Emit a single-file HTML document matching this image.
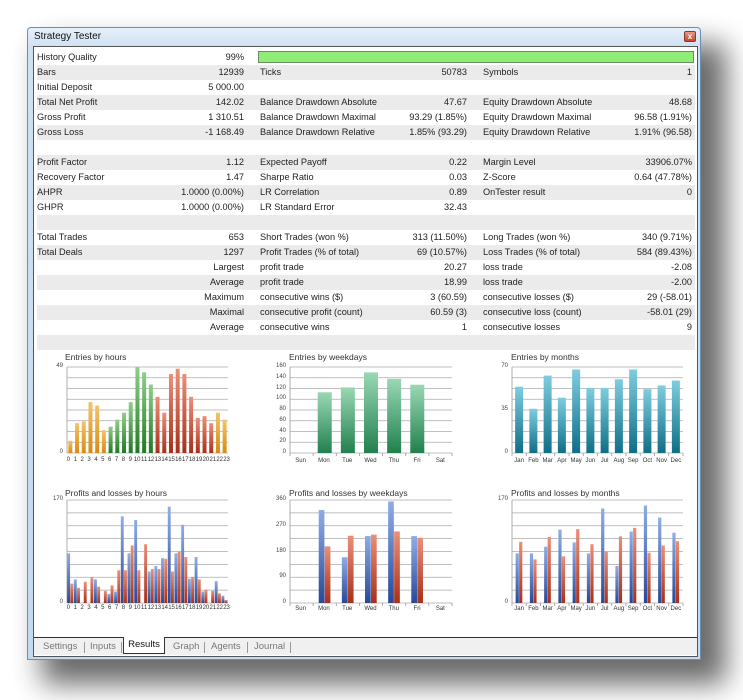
<!DOCTYPE html>
<html><head><meta charset="utf-8">
<style>
*{margin:0;padding:0;box-sizing:border-box}
body{width:743px;height:700px;background:#fff;position:relative;overflow:hidden;font-family:"Liberation Sans",sans-serif;color:#222}
.shadow{position:absolute;left:42px;top:44px;width:684px;height:640px;background:#444;filter:blur(14px);opacity:.8}
.win{position:absolute;left:27px;top:27px;width:674px;height:633px;background:linear-gradient(#e6f0fa,#cfe0f2 20px,#c4daf0);border:1px solid #6d8fae;border-radius:4px 4px 0 0}
.title{position:absolute;left:6px;top:3px;font-size:10px;color:#111}
.close{position:absolute;left:656px;top:3px;width:12px;height:11px;background:linear-gradient(#e79a85,#c7452c);border:1px solid #8a3a2a;border-radius:2px;color:#fff;font-size:8px;text-align:center;line-height:9px;font-weight:bold}
.content{position:absolute;left:5px;top:18px;width:665px;height:611px;background:#fff;border:1px solid #555}
.row{position:absolute;left:3px;width:658px;height:15px;font-size:9.2px;line-height:15px}
.g{background:#ebebeb}
.row span{position:absolute;white-space:nowrap}
.tabs{position:absolute;left:0;top:590px;width:663px;height:18px;background:#f0f0f0;border-top:1px solid #333;font-size:9.5px;color:#777}
.tabs span{position:absolute;top:3px}
.sep{width:1px;height:11px;background:#999;top:4px!important}
.act{position:absolute;left:89px;top:-1px;width:42px;height:17px;background:#fff;border:1px solid #333;border-top:none;color:#111;text-align:center;line-height:15px}
.ct{position:absolute;font-size:8.5px;color:#333}
.yl{position:absolute;font-size:6px;color:#444;text-align:right;width:20px}
.xl{position:absolute;display:flex;font-size:6px;color:#333}
.xl span{flex:1;text-align:center}
.a{left:0}.b{right:451px}.c{left:223px}.d{right:228px}.e{left:446px}.f{right:3px}
</style></head><body>
<div class="shadow"></div>
<div class="win">
<div class="title">Strategy Tester</div>
<div class="close">x</div>
<div class="content">
<div class="row" style="top:3px"><span class="a">History Quality</span><span class="b">99%</span></div>
<div style="position:absolute;left:224px;top:4px;width:436px;height:12px;background:#8fec76;border:1px solid #6a8f60"></div>
<div class="row g" style="top:18px"><span class="a">Bars</span><span class="b">12939</span><span class="c">Ticks</span><span class="d">50783</span><span class="e">Symbols</span><span class="f">1</span></div>
<div class="row" style="top:33px"><span class="a">Initial Deposit</span><span class="b">5 000.00</span></div>
<div class="row g" style="top:48px"><span class="a">Total Net Profit</span><span class="b">142.02</span><span class="c">Balance Drawdown Absolute</span><span class="d">47.67</span><span class="e">Equity Drawdown Absolute</span><span class="f">48.68</span></div>
<div class="row" style="top:63px"><span class="a">Gross Profit</span><span class="b">1 310.51</span><span class="c">Balance Drawdown Maximal</span><span class="d">93.29 (1.85%)</span><span class="e">Equity Drawdown Maximal</span><span class="f">96.58 (1.91%)</span></div>
<div class="row g" style="top:78px"><span class="a">Gross Loss</span><span class="b">-1 168.49</span><span class="c">Balance Drawdown Relative</span><span class="d">1.85% (93.29)</span><span class="e">Equity Drawdown Relative</span><span class="f">1.91% (96.58)</span></div>
<div class="row" style="top:93px"></div>
<div class="row g" style="top:108px"><span class="a">Profit Factor</span><span class="b">1.12</span><span class="c">Expected Payoff</span><span class="d">0.22</span><span class="e">Margin Level</span><span class="f">33906.07%</span></div>
<div class="row" style="top:123px"><span class="a">Recovery Factor</span><span class="b">1.47</span><span class="c">Sharpe Ratio</span><span class="d">0.03</span><span class="e">Z-Score</span><span class="f">0.64 (47.78%)</span></div>
<div class="row g" style="top:138px"><span class="a">AHPR</span><span class="b">1.0000 (0.00%)</span><span class="c">LR Correlation</span><span class="d">0.89</span><span class="e">OnTester result</span><span class="f">0</span></div>
<div class="row" style="top:153px"><span class="a">GHPR</span><span class="b">1.0000 (0.00%)</span><span class="c">LR Standard Error</span><span class="d">32.43</span></div>
<div class="row g" style="top:168px"></div>
<div class="row" style="top:183px"><span class="a">Total Trades</span><span class="b">653</span><span class="c">Short Trades (won %)</span><span class="d">313 (11.50%)</span><span class="e">Long Trades (won %)</span><span class="f">340 (9.71%)</span></div>
<div class="row g" style="top:198px"><span class="a">Total Deals</span><span class="b">1297</span><span class="c">Profit Trades (% of total)</span><span class="d">69 (10.57%)</span><span class="e">Loss Trades (% of total)</span><span class="f">584 (89.43%)</span></div>
<div class="row" style="top:213px"><span class="b">Largest</span><span class="c">profit trade</span><span class="d">20.27</span><span class="e">loss trade</span><span class="f">-2.08</span></div>
<div class="row g" style="top:228px"><span class="b">Average</span><span class="c">profit trade</span><span class="d">18.99</span><span class="e">loss trade</span><span class="f">-2.00</span></div>
<div class="row" style="top:243px"><span class="b">Maximum</span><span class="c">consecutive wins ($)</span><span class="d">3 (60.59)</span><span class="e">consecutive losses ($)</span><span class="f">29 (-58.01)</span></div>
<div class="row g" style="top:258px"><span class="b">Maximal</span><span class="c">consecutive profit (count)</span><span class="d">60.59 (3)</span><span class="e">consecutive loss (count)</span><span class="f">-58.01 (29)</span></div>
<div class="row" style="top:273px"><span class="b">Average</span><span class="c">consecutive wins</span><span class="d">1</span><span class="e">consecutive losses</span><span class="f">9</span></div>
<div class="row g" style="top:288px"></div>
<div class="tabs">
<span style="left:9px">Settings</span><span class="sep" style="left:50px"></span>
<span style="left:56px">Inputs</span><span class="sep" style="left:87px"></span>
<div class="act">Results</div>
<span style="left:139px">Graph</span><span class="sep" style="left:170px"></span>
<span style="left:177px">Agents</span><span class="sep" style="left:213px"></span>
<span style="left:220px">Journal</span><span class="sep" style="left:256px"></span>
</div>
</div>
</div>

<svg id="ch" width="743" height="700" style="position:absolute;left:0;top:0">
<defs>
<linearGradient id="gO" x1="0" y1="0" x2="0" y2="1"><stop offset="0" stop-color="#f2c56a"/><stop offset="1" stop-color="#d98a10"/></linearGradient>
<linearGradient id="gG" x1="0" y1="0" x2="0" y2="1"><stop offset="0" stop-color="#8fd08a"/><stop offset="1" stop-color="#1f7a22"/></linearGradient>
<linearGradient id="gR" x1="0" y1="0" x2="0" y2="1"><stop offset="0" stop-color="#ec8f78"/><stop offset="1" stop-color="#a8301a"/></linearGradient>
<linearGradient id="gW" x1="0" y1="0" x2="0" y2="1"><stop offset="0" stop-color="#9ad8b4"/><stop offset="1" stop-color="#21804e"/></linearGradient>
<linearGradient id="gC" x1="0" y1="0" x2="0" y2="1"><stop offset="0" stop-color="#7fcde0"/><stop offset="1" stop-color="#0e6f86"/></linearGradient>
<linearGradient id="gB" x1="0" y1="0" x2="0" y2="1"><stop offset="0" stop-color="#8faee6"/><stop offset="1" stop-color="#27489a"/></linearGradient>
</defs>
</svg>

<div class="ct" style="left:65px;top:352px">Entries by hours</div>
<div class="ct" style="left:289px;top:352px">Entries by weekdays</div>
<div class="ct" style="left:511px;top:352px">Entries by months</div>
<div class="ct" style="left:65px;top:488px">Profits and losses by hours</div>
<div class="ct" style="left:289px;top:488px">Profits and losses by weekdays</div>
<div class="ct" style="left:511px;top:488px">Profits and losses by months</div>

<div class="yl" style="left:43px;top:363px">49</div><div class="yl" style="left:43px;top:449px">0</div>
<div class="yl" style="left:266px;top:363px">160</div><div class="yl" style="left:266px;top:374px">140</div><div class="yl" style="left:266px;top:385px">120</div><div class="yl" style="left:266px;top:395px">100</div><div class="yl" style="left:266px;top:406px">80</div><div class="yl" style="left:266px;top:417px">60</div><div class="yl" style="left:266px;top:428px">40</div><div class="yl" style="left:266px;top:438px">20</div><div class="yl" style="left:266px;top:449px">0</div>
<div class="yl" style="left:488px;top:363px">70</div><div class="yl" style="left:488px;top:406px">35</div><div class="yl" style="left:488px;top:449px">0</div>
<div class="yl" style="left:43px;top:496px">170</div><div class="yl" style="left:43px;top:599px">0</div>
<div class="yl" style="left:266px;top:496px">360</div><div class="yl" style="left:266px;top:522px">270</div><div class="yl" style="left:266px;top:548px">180</div><div class="yl" style="left:266px;top:573px">90</div><div class="yl" style="left:266px;top:599px">0</div>
<div class="yl" style="left:488px;top:496px">170</div><div class="yl" style="left:488px;top:599px">0</div>

<div class="xl" style="left:65px;top:457px;width:165px"><span>0</span><span>1</span><span>2</span><span>3</span><span>4</span><span>5</span><span>6</span><span>7</span><span>8</span><span>9</span><span>10</span><span>11</span><span>12</span><span>13</span><span>14</span><span>15</span><span>16</span><span>17</span><span>18</span><span>19</span><span>20</span><span>21</span><span>22</span><span>23</span></div>
<div class="xl" style="left:65px;top:605px;width:165px"><span>0</span><span>1</span><span>2</span><span>3</span><span>4</span><span>5</span><span>6</span><span>7</span><span>8</span><span>9</span><span>10</span><span>11</span><span>12</span><span>13</span><span>14</span><span>15</span><span>16</span><span>17</span><span>18</span><span>19</span><span>20</span><span>21</span><span>22</span><span>23</span></div>
<div class="xl" style="left:289px;top:458px;width:163px"><span>Sun</span><span>Mon</span><span>Tue</span><span>Wed</span><span>Thu</span><span>Fri</span><span>Sat</span></div>
<div class="xl" style="left:289px;top:606px;width:163px"><span>Sun</span><span>Mon</span><span>Tue</span><span>Wed</span><span>Thu</span><span>Fri</span><span>Sat</span></div>
<div class="xl" style="left:512px;top:458px;width:171px"><span>Jan</span><span>Feb</span><span>Mar</span><span>Apr</span><span>May</span><span>Jun</span><span>Jul</span><span>Aug</span><span>Sep</span><span>Oct</span><span>Nov</span><span>Dec</span></div>
<div class="xl" style="left:512px;top:606px;width:171px"><span>Jan</span><span>Feb</span><span>Mar</span><span>Apr</span><span>May</span><span>Jun</span><span>Jul</span><span>Aug</span><span>Sep</span><span>Oct</span><span>Nov</span><span>Dec</span></div>

<script>
var S=document.getElementById('ch'),NS='http://www.w3.org/2000/svg';
function el(t,a){var e=document.createElementNS(NS,t);for(var k in a)e.setAttribute(k,a[k]);S.appendChild(e);}
function chart(x0,x1,y0,y1,max,grid,series,bw,ticks){
 for(var i=0;i<=grid;i++){var y=y0+(y1-y0)*i/grid;el('line',{x1:x0,x2:x1,y1:y,y2:y,stroke:'#aaa','stroke-width':0.8});}
 el('line',{x1:x0,x2:x0,y1:y0,y2:y1,stroke:'#999','stroke-width':0.8});
 var n=series[0].v.length,sw=(x1-x0)/n;
 if(ticks)for(var i=0;i<=n;i++)el('line',{x1:x0+sw*i,x2:x0+sw*i,y1:y1,y2:y1+3,stroke:'#999','stroke-width':0.8});
 var m=series.length;
 for(var i=0;i<n;i++){
  var cx=x0+sw*(i+0.5),tot=bw*m;
  for(var s=0;s<m;s++){var v=series[s].v[i];if(!v)continue;var h=(y1-y0)*v/max;
   var f=typeof series[s].c=='string'?series[s].c:series[s].c[i];
   el('rect',{x:cx-tot/2+s*bw,y:y1-h,width:bw-(m>1?0.3:0),height:h,fill:'url(#'+f+')'});}
 }
}
var hc=[];for(var i=0;i<24;i++)hc.push(i<6||i>21?'gO':(i<13?'gG':'gR'));
chart(67,228,367,453,49,8,[{v:[7,17,18,29,27,13,15,19,23,29,49,46,39,32,23,45,48,45,32,20,21,17,23,19],c:hc}],4,false);
chart(290,452,367,453,160,8,[{v:[0,113,122,150,138,127,0],c:'gW'}],14,true);
chart(512,683,367,453,70,8,[{v:[54,36,63,45,68,53,53,60,68,52,55,59],c:'gC'}],8,true);
chart(67,228,500,603,170,8,[{v:[82,39,0,0,39,0,15,19,143,82,137,0,52,61,74,159,82,129,40,76,19,0,36,12],c:'gB'},{v:[32,25,35,42,27,20,29,54,54,95,54,97,56,56,73,52,85,76,43,39,22,20,16,5],c:'gR'}],3.2,false);
chart(290,452,500,603,360,8,[{v:[0,325,160,234,355,234,0],c:'gB'},{v:[0,198,235,239,250,228,0],c:'gR'}],6,true);
chart(512,683,500,603,170,8,[{v:[82,82,93,121,100,82,156,61,118,161,141,116],c:'gB'},{v:[101,72,109,77,122,97,85,110,124,83,95,102],c:'gR'}],3.5,true);
</script>
</body></html>
